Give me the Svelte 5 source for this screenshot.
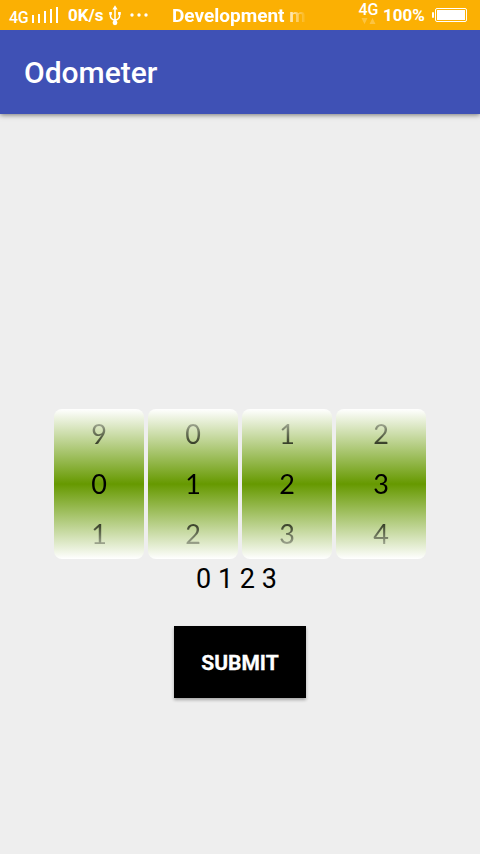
<script>
  const wheels = [[9, 0, 1], [0, 1, 2], [1, 2, 3], [2, 3, 4]];
  const bars = [8, 9, 12, 14, 16];
</script>

<div class="screen">
  <div class="status">
    <span class="net">4G</span>
    <div class="bars">
      {#each bars as h}<i style="height:{h}px"></i>{/each}
    </div>
    <span class="speed">0K/s</span>
    <svg class="usb" width="12" height="21" viewBox="0 0 12 21" fill="none" stroke="#fff" stroke-width="1.5">
      <path d="M6 4V18M1.5 8.5v3q0 2.2 4.5 4M10.5 8.5v3q0 2.2-4.5 4" />
      <path d="M6 .3l2.6 4.2H3.4zM.2 7h2.7v2.7H.2zM9.1 7h2.7v2.7H9.1z" fill="#fff" stroke="none" />
      <circle cx="6" cy="17.8" r="2.4" fill="#fff" stroke="none" />
    </svg>
    <svg class="more" width="18" height="4" viewBox="0 0 18 4" fill="#fff">
      <circle cx="2" cy="2" r="1.7" /><circle cx="9" cy="2" r="1.7" /><circle cx="16" cy="2" r="1.7" />
    </svg>
    <span class="notice">Development m</span>
    <div class="mobile">
      <span>4G</span>
      <svg width="15" height="6" viewBox="0 0 15 6" fill="#fff" opacity=".25"><path d="M.5 0h6L3.5 6zM8.5 6h6l-3-6z" /></svg>
    </div>
    <span class="percent">100%</span>
    <svg class="battery" width="36" height="14" viewBox="0 0 36 14">
      <rect x="0" y="4" width="2" height="6" rx="1" fill="#fff" />
      <rect x="3.5" y=".5" width="31" height="13" rx="1.5" fill="none" stroke="#fff" />
      <rect x="5" y="2" width="28" height="10" fill="#fff" />
    </svg>
  </div>
  <header>Odometer</header>
  <main>
    <div class="odometer">
      {#each wheels as wheel}
        <div class="wheel">
          <div class="digits">
            {#each wheel as digit}<span>{digit}</span>{/each}
          </div>
        </div>
      {/each}
    </div>
    <div class="reading">0 1 2 3</div>
    <button>SUBMIT</button>
  </main>
</div>

<style>
  :global(body) { margin: 0; }
  .screen {
    width: 480px;
    height: 854px;
    overflow: hidden;
    background: #eee;
    display: flex;
    flex-direction: column;
    font-family: Roboto, sans-serif;
  }
  .status {
    position: relative;
    z-index: 1;
    height: 30px;
    flex: none;
    display: flex;
    align-items: flex-start;
    background: #fbb003;
    color: #fff;
    white-space: nowrap;
  }
  .net {
    width: 23px;
    margin-left: 9px;
    padding-top: 8px;
    font: 500 16px/19px Roboto, sans-serif;
    letter-spacing: -.3px;
  }
  .bars {
    width: 27px;
    height: 23px;
    display: flex;
    align-items: flex-end;
    gap: 4px;
  }
  .bars i { width: 2px; background: #fff; }
  .speed {
    width: 41px;
    margin-left: 9px;
    padding-top: 5px;
    font: 700 17px/20px Roboto, sans-serif;
  }
  .usb { margin: 5px 0 0; }
  .more { margin: 13px 0 0 9px; }
  .notice {
    width: 133px;
    margin-left: 24px;
    padding-top: 5px;
    font: 700 19px/22px Roboto, sans-serif;
    mask-image: linear-gradient(to right, #000 112px, transparent 135px);
  }
  .mobile {
    width: 21px;
    margin-left: 53px;
    display: flex;
    flex-direction: column;
    align-items: center;
    font: 500 16px/17px Roboto, sans-serif;
  }
  .mobile span { padding-top: 1px; }
  .percent {
    width: 44px;
    margin-left: 4px;
    padding-top: 5px;
    font: 700 17px/20px Roboto, sans-serif;
  }
  .battery { margin: 8px 0 0 5px; }
  header {
    height: 84px;
    flex: none;
    box-sizing: border-box;
    padding-left: 24px;
    background: #3f51b5;
    color: #fff;
    font: 500 30px/86px Roboto, sans-serif;
    box-shadow: 0 1px 5px rgba(0, 0, 0, .5);
  }
  main {
    flex: 1;
    display: flex;
    flex-direction: column;
    align-items: center;
    padding-top: 295px;
  }
  .odometer { display: flex; gap: 4px; }
  .wheel {
    width: 90px;
    height: 150px;
    border-radius: 8px;
    background: linear-gradient(#fff, #690 50%, #fff);
  }
  .digits {
    display: flex;
    flex-direction: column;
    align-items: center;
    font: 27px/50px Lato, sans-serif;
    color: #000;
    mask-image: linear-gradient(transparent, #000 50px, #000 100px, transparent);
  }
  .digits span { height: 50px; }
  .reading {
    height: 40px;
    margin-right: 7px;
    font: 27px/40px Roboto, sans-serif;
    color: #000;
    white-space: pre;
  }
  button {
    width: 132px;
    height: 72px;
    margin: 27px 0 0;
    padding: 0;
    border: 0;
    background: #000;
    color: #fff;
    font: 700 21px/74px Roboto, sans-serif;
    -webkit-text-stroke: .3px #fff;
    box-shadow: 0 2px 3px rgba(0, 0, 0, .3);
  }
</style>
